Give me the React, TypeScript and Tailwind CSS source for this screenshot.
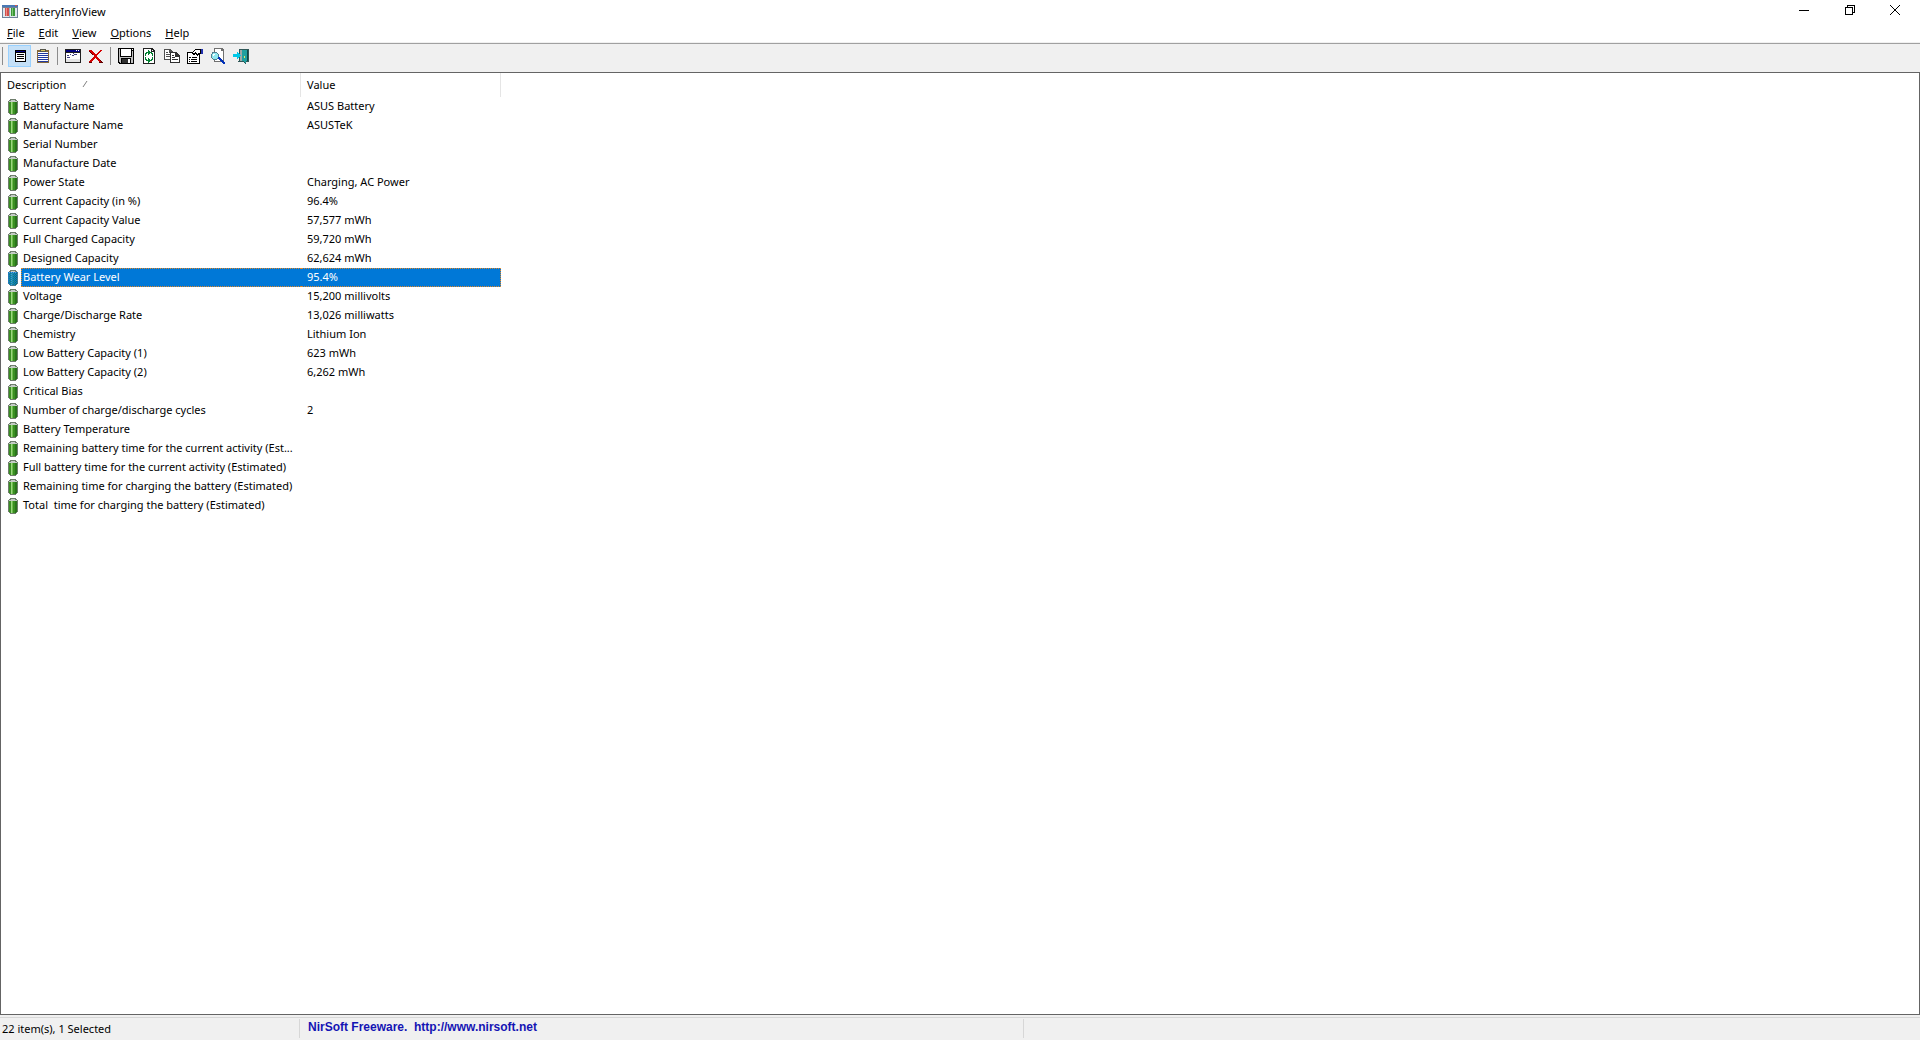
import React, { useState } from 'react';

interface Item {
    name: string;
    value: string;
}

const ITEMS: Item[] = [
    { name: 'Battery Name', value: 'ASUS Battery' },
    { name: 'Manufacture Name', value: 'ASUSTeK' },
    { name: 'Serial Number', value: '' },
    { name: 'Manufacture Date', value: '' },
    { name: 'Power State', value: 'Charging, AC Power' },
    { name: 'Current Capacity (in %)', value: '96.4%' },
    { name: 'Current Capacity Value', value: '57,577 mWh' },
    { name: 'Full Charged Capacity', value: '59,720 mWh' },
    { name: 'Designed Capacity', value: '62,624 mWh' },
    { name: 'Battery Wear Level', value: '95.4%' },
    { name: 'Voltage', value: '15,200 millivolts' },
    { name: 'Charge/Discharge Rate', value: '13,026 milliwatts' },
    { name: 'Chemistry', value: 'Lithium Ion' },
    { name: 'Low Battery Capacity (1)', value: '623 mWh' },
    { name: 'Low Battery Capacity (2)', value: '6,262 mWh' },
    { name: 'Critical Bias', value: '' },
    { name: 'Number of charge/discharge cycles', value: '2' },
    { name: 'Battery Temperature', value: '' },
    { name: 'Remaining battery time for the current activity (Est...', value: '' },
    { name: 'Full battery time for the current activity (Estimated)', value: '' },
    { name: 'Remaining time for charging the battery (Estimated)', value: '' },
    { name: 'Total  time for charging the battery (Estimated)', value: '' },
];

const MENUS = ['File', 'Edit', 'View', 'Options', 'Help'];

const Icon = ({ children }: { children: React.ReactNode }) => (
    <svg width="16" height="16" viewBox="0 0 16 16" shapeRendering="crispEdges" aria-hidden="true">
        {children}
    </svg>
);

const AppIcon = () => (
    <Icon>
        <path d="M0 1h16v13H0z" fill="#6f8198" />
        <path d="M0 1h16v2H0z" fill="#4a78b4" />
        <path d="M1 4h14v9H1z" fill="#dfe8ee" />
        <path d="M13 1h2v1h-2z" fill="#d8584a" />
        <path d="M3 4h4v8H3z" fill="#d0504c" />
        <path d="M4 4h1v8H4z" fill="#f08c86" />
        <path d="M9 4h4v8H9z" fill="#3b9638" />
        <path d="M10 4h1v8h-1z" fill="#7cc874" />
        <path d="M7 4h1v9H7z" fill="#9fb0bf" />
    </Icon>
);

const BatteryIcon = ({ selected }: { selected: boolean }) => (
    <svg width="10" height="16" viewBox="0 0 10 16" shapeRendering="crispEdges" aria-hidden="true">
        <path d="M2 0h6v1h1v1h1v12H9v1H8v1H2v-1H1v-1H0V2h1V1h1z" fill="#6f7d6c" />
        <path d="M3 1h4v1h2v1H1V2h2z" fill="#c4cbc6" />
        <path d="M1 3h8v11H8v1H2v-1H1z" fill="#3a8f22" />
        <path d="M3 3h1v12H3z" fill="#9bd680" />
        <path d="M4 3h1v12H4z" fill="#6dbb4c" />
        <path d="M7 3h2v11H8v1H7z" fill="#28741a" />
        {selected && (
            <>
                <path d="M0 2h10v12H9v1H8v1H2v-1H1v-1H0z" fill="#0078d7" fillOpacity="0.4" />
                <path d="M0.5 2v12M2.5 2v13M4.5 2v13M6.5 2v13M8.5 2v12" stroke="#0078d7" strokeDasharray="1 1" />
                <path d="M1.5 3v12M3.5 3v12M5.5 3v12M7.5 3v12" stroke="#0078d7" strokeDasharray="1 1" />
            </>
        )}
    </svg>
);

const PropertiesViewIcon = () => (
    <Icon>
        <path d="M3 2h11v12H3z" fill="#000" />
        <path d="M4 5h9v8H4z" fill="#fff" />
        <path d="M4 3h9v1H4z" fill="#000080" />
        <path d="M5 6h7v1H5zM5 8h7v1H5zM5 10h7v1H5z" fill="#000" />
    </Icon>
);

const LogIcon = () => (
    <Icon>
        <path d="M2 2h12v13H2z" fill="#84683c" />
        <path d="M3 4h10v10H3z" fill="#fff" />
        <path d="M5 1h6v3H5z" fill="#55554a" />
        <path d="M6 2h4v1H6z" fill="#d8c860" />
        <path d="M3 5h10v1H3zM3 7h10v1H3zM3 9h10v1H3zM3 11h10v1H3zM3 13h10v1H3z" fill="#2038a0" />
    </Icon>
);

const WindowIcon = () => (
    <Icon>
        <path d="M0 1h16v14H0z" fill="#202020" />
        <path d="M1 5h14v9H1z" fill="#fff" />
        <path d="M1 2h14v2H1z" fill="#000080" />
        <path d="M11 2h1v1h-1zM13 2h1v1h-1z" fill="#fff" />
        <path d="M2 7h2v1H2zM5 6h1v1H5zM7 7h2v1H7zM2 9h3v1H2zM8 5h1v1H8zM9 6h3v1H9z" fill="#404080" />
        <path d="M1 11h14v3H1z" fill="#e4e4e4" />
    </Icon>
);

const DeleteIcon = () => (
    <Icon>
        <path d="M1 2h3v1h1v1h1v1h1v1h2V5h1V4h1V3h1V2h2v1h-1v1h-1v1h-1v1h-1v1H9v2h1v1h1v1h1v1h1v1h1v1h-3v-1h-1v-1H9v-1H8v-1H7v1H6v1H5v1H4v1H1v-1h1v-1h1v-1h1v-1h1V9h1V7H5V6H4V5H3V4H2V3H1z" fill="#d40000" />
        <path d="M1 3h1v1h1v1h1v1h1v1H4V6H3V5H2V4H1zM1 14h3v1H1zM11 14h4v1h-4zM12 12h1v1h1v1h-1v-1h-1z" fill="#600000" />
    </Icon>
);

const SaveIcon = () => (
    <Icon>
        <path d="M0 0h16v16H1v-1H0z" fill="#000" />
        <path d="M1 1h1v13H1zM14 3h1v12h-1zM2 9h12v1H2z" fill="#c0c0c0" />
        <path d="M3 1h10v7H3z" fill="#fff" />
        <path d="M14 1h1v1h-1zM10 11h2v4h-2z" fill="#fff" />
        <path d="M4 11h6v4H4z" fill="#303030" />
        <path d="M2 10h1v5H2zM13 10h1v5h-1z" fill="#c0c0c0" />
    </Icon>
);

const RefreshIcon = () => (
    <Icon>
        <path d="M2 0h9l3 3v13H2z" fill="#202020" />
        <path d="M3 1h7v3h3v11H3z" fill="#fff" />
        <path d="M11 2h1v1h-1z" fill="#fff" />
        <path d="M7 2h1v1h1v1h2v1h1v3h-1V6h-1V5H9v1H8v1H7V5H6v1H5v2H4V5h1V4h2z" fill="#008030" />
        <path d="M4 9h1v2h1v1h1v-2h1v1h1v1h1v-1h1V9h1v3h-1v1H9v1H8v1H7v-2H5v-1H4z" fill="#008030" />
    </Icon>
);

const CopyIcon = () => (
    <Icon>
        <path d="M0 1h6l3 3v8H0z" fill="#505050" />
        <path d="M1 2h4v3h3v6H1z" fill="#fff" />
        <path d="M2 4h2v1H2zM2 6h4v1H2zM2 8h4v1H2z" fill="#505050" />
        <path d="M6 4h6l4 4v7H6z" fill="#303030" />
        <path d="M7 5h4v4h4v5H7z" fill="#fff" />
        <path d="M8 7h2v1H8zM8 9h3v1H8zM8 11h6v1H8zM12 6h1v1h-1zM13 7h1v1h-1z" fill="#303030" />
    </Icon>
);

const PropertiesIcon = () => (
    <Icon>
        <path d="M0 4h13v12H0z" fill="#000" />
        <path d="M1 5h11v10H1z" fill="#fff" />
        <path d="M2 9h2v1H2zM5 9h5v1H5zM2 11h1v1H2zM4 11h6v1H4zM2 13h1v1H2zM4 13h6v1H4z" fill="#000" />
        <path d="M5 4h1V3h1V2h1V1h6v1h1v4h-2v1h-2v1h-1V7H9V6H8v1H6V6H5z" fill="#000" />
        <path d="M6 4h1V3h1V2h5v3h-2v1h-1V5H9V4H8v1H6z" fill="#fff" />
        <path d="M14 1h2v5h-2z" fill="#2030b0" />
    </Icon>
);

const FindIcon = () => (
    <Icon>
        <path d="M4 0h8l2 2v12H4z" fill="#707070" />
        <path d="M5 1h6v2h2v10H5z" fill="#fff" />
        <path d="M2 4h5v1h1v1h1v4H8v1H7v1H3v-1H2v-1H1V6h1z" fill="#508090" />
        <path d="M3 5h4v1h1v4H7v1H3v-1H2V6h1z" fill="#90e8f0" />
        <path d="M3 6h2v1H4v1H3z" fill="#fff" />
        <path d="M8 9h2v1h1v1h1v1h1v1h1v1h1v2h-2v-1h-1v-1h-1v-1h-1v-1H9v-1H8z" fill="#0030b8" />
    </Icon>
);

const ExitIcon = () => (
    <Icon>
        <path d="M6 1h10v13h-3v2h-1v-1h-1v-1H5v-1h1z" fill="#305858" />
        <path d="M7 2h3v11H7z" fill="#a0a8a8" />
        <path d="M9 2h5v11h-1v2h-1v-1h-1v-1H9z" fill="#20a0a0" />
        <path d="M14 2h1v11h-1z" fill="#104848" />
        <path d="M11 8h1v2h-1z" fill="#e0f060" />
        <path d="M0 6h4V4h1v1h1v1h1v1h1v1H7v1H6v1H5v1H4V9H0z" fill="#00c8e8" />
    </Icon>
);

const ToolButton = ({ label, active, children }: { label: string; active?: boolean; children: React.ReactNode }) => (
    <button
        type="button"
        aria-label={label}
        title={label}
        aria-pressed={active}
        className={`flex h-[22px] w-[23px] items-center justify-center border ${
            active ? 'border-[#99d1ff] bg-[#c5e0f7]' : 'border-transparent hover:bg-[#e5f3ff]'
        }`}
    >
        {children}
    </button>
);

const Separator = () => <div className="mx-[3px] h-[18px] w-px bg-[#8c8c8c]" />;

const App: React.FC = () => {
    const [selected, setSelected] = useState(9);

    return (
        <div className="flex h-screen flex-col bg-[#f0f0f0] font-['Noto_Sans','Open_Sans',sans-serif] text-[11px] leading-[19px] text-black">
            <header className="flex h-[23px] items-center bg-white">
                <div className="flex flex-1 items-center gap-1 pl-[2px]">
                    <AppIcon />
                    <h1 className="pl-px">BatteryInfoView</h1>
                </div>
                <div className="flex self-start pr-[2px]">
                    <button type="button" aria-label="Minimize" className="flex h-5 w-[46px] items-center justify-center">
                        <svg width="10" height="10" viewBox="0 0 10 10" shapeRendering="crispEdges">
                            <path d="M0 5h10v1H0z" />
                        </svg>
                    </button>
                    <button type="button" aria-label="Restore" className="flex h-5 w-[45px] items-center justify-center">
                        <svg width="10" height="10" viewBox="0 0 10 10" fill="none" stroke="#000" shapeRendering="crispEdges">
                            <path d="M.5 2.5h7v7h-7zM2.5 2.5v-2h7v7h-2" />
                        </svg>
                    </button>
                    <button type="button" aria-label="Close" className="flex h-5 w-[46px] items-center justify-center">
                        <svg width="10" height="10" viewBox="0 0 10 10" stroke="#000">
                            <path d="M0 0l10 10M10 0L0 10" />
                        </svg>
                    </button>
                </div>
            </header>

            <nav className="flex h-[19px] items-center bg-white">
                {MENUS.map(menu => (
                    <button key={menu} type="button" className="px-[7px]">
                        <span className="underline underline-offset-1">{menu[0]}</span>
                        {menu.slice(1)}
                    </button>
                ))}
            </nav>

            <div role="toolbar" className="mt-px flex h-[29px] items-center border-t border-[#a0a0a0] pb-[4px] pl-[2px]">
                <div className="mr-[5px] h-[18px] w-px bg-[#8c8c8c]" />
                <ToolButton label="Show battery information" active><PropertiesViewIcon /></ToolButton>
                <ToolButton label="Show battery log"><LogIcon /></ToolButton>
                <Separator />
                <ToolButton label="Advanced options"><WindowIcon /></ToolButton>
                <ToolButton label="Clear log"><DeleteIcon /></ToolButton>
                <Separator />
                <ToolButton label="Save"><SaveIcon /></ToolButton>
                <ToolButton label="Refresh"><RefreshIcon /></ToolButton>
                <ToolButton label="Copy"><CopyIcon /></ToolButton>
                <ToolButton label="Properties"><PropertiesIcon /></ToolButton>
                <ToolButton label="Find"><FindIcon /></ToolButton>
                <ToolButton label="Exit"><ExitIcon /></ToolButton>
            </div>

            <main className="min-h-0 flex-1 overflow-hidden border border-[#646464] bg-white">
                <table className="w-[500px] table-fixed border-separate border-spacing-0 text-left">
                    <colgroup>
                        <col className="w-[300px]" />
                        <col className="w-[200px]" />
                    </colgroup>
                    <thead>
                        <tr className="h-6">
                            <th className="border-r border-[#e5e5e5] p-0 pb-[2px] pl-[6px] font-normal">
                                <span className="flex items-center gap-4">
                                    Description
                                    <svg width="6" height="6" viewBox="0 0 6 6" stroke="#808080" aria-hidden="true">
                                        <path d="M1 6L5 0" />
                                    </svg>
                                </span>
                            </th>
                            <th className="border-r border-[#e5e5e5] p-0 pb-[2px] pl-[6px] font-normal">Value</th>
                        </tr>
                    </thead>
                    <tbody>
                        {ITEMS.map((item, i) => {
                            const isSelected = i === selected;
                            return (
                                <tr key={item.name} onClick={() => setSelected(i)} className="h-[19px]">
                                    <td className="p-0">
                                        <div className="flex h-[19px] items-center pl-[7px]">
                                            <BatteryIcon selected={isSelected} />
                                            <span
                                                className={`ml-[3px] h-[19px] min-w-0 flex-1 whitespace-pre border border-r-0 pl-px leading-[16px] ${
                                                    isSelected ? 'border-dotted border-[#e08728] bg-[#0078d7] text-white' : 'border-transparent'
                                                }`}
                                            >
                                                {item.name}
                                            </span>
                                        </div>
                                    </td>
                                    <td className="p-0">
                                        <div
                                            className={`h-[19px] border border-l-0 pl-[6px] leading-[16px] ${
                                                isSelected ? 'border-dotted border-[#e08728] bg-[#0078d7] text-white' : 'border-transparent'
                                            }`}
                                        >
                                            {item.value}
                                        </div>
                                    </td>
                                </tr>
                            );
                        })}
                    </tbody>
                </table>
            </main>

            <footer className="mt-[2px] flex h-[23px] items-center border-t border-[#d7d7d7] pb-[2px]">
                <div className="w-[300px] border-r border-[#d7d7d7] pl-[2px]">{ITEMS.length} item(s), 1 Selected</div>
                <div className="w-[724px] border-r border-[#d7d7d7] pl-2">
                    <a
                        href="http://www.nirsoft.net"
                        className="block whitespace-pre pb-[3px] font-['Liberation_Sans',Arial,sans-serif] text-xs leading-[16px] font-bold text-[#1414b4]"
                    >
                        {'NirSoft Freeware.  http://www.nirsoft.net'}
                    </a>
                </div>
            </footer>
        </div>
    );
};

export default App;
